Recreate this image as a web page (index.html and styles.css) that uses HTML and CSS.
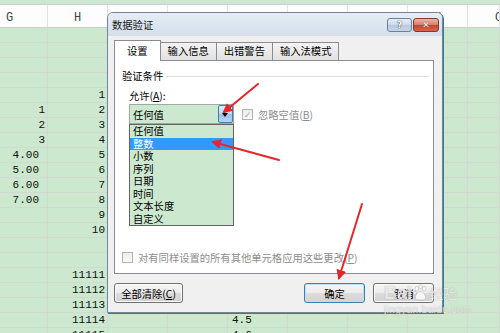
FILE: index.html
```html
<!DOCTYPE html>
<html lang="zh-CN">
<head>
    <meta charset="UTF-8">
    <title>数据验证</title>
    <link rel="stylesheet" href="styles.css">
</head>
<body>
    <div class="workbook">
        <table class="sheet">
            <colgroup>
                <col class="col-g">
                <col class="col-w" span="7">
                <col class="col-o">
            </colgroup>
            <tr class="strip"><td></td><td></td><td></td><td></td><td></td><td></td><td></td><td></td><td></td></tr>
            <tr class="head"><td class="h-first">G</td><td>H</td><td>I</td><td>J</td><td>K</td><td>L</td><td>M</td><td>N</td><td class="h-last">O</td></tr>
            <tr><td></td><td></td><td></td><td></td><td></td><td></td><td></td><td></td><td></td></tr>
            <tr><td></td><td></td><td></td><td></td><td></td><td></td><td></td><td></td><td></td></tr>
            <tr><td></td><td></td><td></td><td></td><td></td><td></td><td></td><td></td><td></td></tr>
            <tr><td></td><td></td><td></td><td></td><td></td><td></td><td></td><td></td><td></td></tr>
            <tr><td></td><td>1</td><td></td><td></td><td></td><td></td><td></td><td></td><td></td></tr>
            <tr><td>1</td><td>2</td><td></td><td></td><td></td><td></td><td></td><td></td><td></td></tr>
            <tr><td>2</td><td>3</td><td></td><td></td><td></td><td></td><td></td><td></td><td></td></tr>
            <tr><td>3</td><td>4</td><td></td><td></td><td></td><td></td><td></td><td></td><td></td></tr>
            <tr><td class="fx">4.00</td><td>5</td><td></td><td></td><td></td><td></td><td></td><td></td><td></td></tr>
            <tr><td class="fx">5.00</td><td>6</td><td></td><td></td><td></td><td></td><td></td><td></td><td></td></tr>
            <tr><td class="fx">6.00</td><td>7</td><td></td><td></td><td></td><td></td><td></td><td></td><td></td></tr>
            <tr><td class="fx">7.00</td><td>8</td><td></td><td></td><td></td><td></td><td></td><td></td><td></td></tr>
            <tr><td></td><td>9</td><td></td><td></td><td></td><td></td><td></td><td></td><td></td></tr>
            <tr><td></td><td>10</td><td></td><td></td><td></td><td></td><td></td><td></td><td></td></tr>
            <tr><td></td><td></td><td></td><td></td><td></td><td></td><td></td><td></td><td></td></tr>
            <tr><td></td><td></td><td></td><td></td><td></td><td></td><td></td><td></td><td></td></tr>
            <tr><td></td><td>11111</td><td></td><td></td><td></td><td></td><td></td><td></td><td></td></tr>
            <tr><td></td><td>11112</td><td></td><td></td><td></td><td></td><td></td><td></td><td></td></tr>
            <tr><td></td><td>11113</td><td></td><td></td><td></td><td></td><td></td><td></td><td></td></tr>
            <tr><td></td><td>11114</td><td></td><td></td><td class="l">4.5</td><td></td><td></td><td></td><td></td></tr>
            <tr><td></td><td>11115</td><td></td><td></td><td class="l">4.6</td><td></td><td></td><td></td><td></td></tr>
        </table>

        <!-- 数据验证对话框 -->
        <div class="dialog">
            <div class="titlebar">
                <span class="title">数据验证</span>
                <div class="caption-btns">
                    <span class="cap help">?</span>
                    <span class="cap close">✕</span>
                </div>
            </div>
            <div class="client">
                <div class="tabs">
                    <div class="tab active">设置</div>
                    <div class="tab">输入信息</div>
                    <div class="tab">出错警告</div>
                    <div class="tab">输入法模式</div>
                </div>
                <div class="panel">
                    <div class="group">
                        <span>验证条件</span>
                        <i class="rule"></i>
                    </div>
                    <div class="allow-label">允许(<u>A</u>):</div>
                    <div class="allow-row">
                        <div class="combo-wrap">
                            <div class="combo">
                                <span>任何值</span>
                                <span class="drop"></span>
                            </div>
                            <ul class="list">
                                <li>任何值</li>
                                <li class="selected">整数</li>
                                <li>小数</li>
                                <li>序列</li>
                                <li>日期</li>
                                <li>时间</li>
                                <li>文本长度</li>
                                <li>自定义</li>
                            </ul>
                        </div>
                        <div class="check">
                            <span class="box">✓</span>
                            <span>忽略空值(<u>B</u>)</span>
                        </div>
                    </div>
                    <div class="spacer"></div>
                    <div class="check apply">
                        <span class="box"></span>
                        <span>对有同样设置的所有其他单元格应用这些更改(<u>P</u>)</span>
                    </div>
                </div>
                <div class="buttons">
                    <button class="btn btn-clear">全部清除(<u>C</u>)</button>
                    <div class="btn-group">
                        <button class="btn default">确定</button>
                        <button class="btn">取消</button>
                    </div>
                </div>
            </div>
        </div>

        <!-- 标注箭头 -->
        <svg class="arrows" viewBox="0 0 500 333" xmlns="http://www.w3.org/2000/svg">
            <defs>
                <marker id="head" viewBox="0 0 10 10" refX="8" refY="5" markerWidth="5" markerHeight="5" orient="auto">
                    <path d="M0 0L10 5L0 10z" fill="#e8262a"></path>
                </marker>
            </defs>
            <line x1="258" y1="84" x2="224" y2="112" marker-end="url(#head)"></line>
            <line x1="279" y1="160" x2="213" y2="142" marker-end="url(#head)"></line>
            <line x1="362" y1="204" x2="339" y2="278" marker-end="url(#head)"></line>
        </svg>

        <div class="watermark">
            <div class="wm-logo">
                <span class="wm-bai">Bai</span>
                <svg class="wm-paw" viewBox="0 0 16 18" xmlns="http://www.w3.org/2000/svg">
                    <ellipse cx="4" cy="5" rx="1.8" ry="2.4"></ellipse>
                    <ellipse cx="8" cy="2.8" rx="1.8" ry="2.2"></ellipse>
                    <ellipse cx="12" cy="5" rx="1.8" ry="2.4"></ellipse>
                    <ellipse cx="2" cy="9.5" rx="1.5" ry="2"></ellipse>
                    <path d="M8 8c-3 0-5.5 4-5.5 6.5 0 2 2 2.5 3 2.5h5c1 0 3-.5 3-2.5C13.5 12 11 8 8 8z"></path>
                </svg>
                <span class="wm-jy">经验</span>
            </div>
            <div class="wm-url">jingyan.baidu.com</div>
        </div>
    </div>
</body>
</html>
```

FILE: styles.css
```css
:root {
    --sheet-green: #cce8cf;
    --grid: #d3d8d3;
    --tab-border: #898c95;
    --muted: #8d8d8d;
    --select: #3399ff;
}

* {
    margin: 0;
    padding: 0;
    box-sizing: border-box;
}

body {
    width: 500px;
    height: 333px;
    overflow: hidden;
    background: var(--sheet-green);
    font-family: "Noto Sans CJK SC", sans-serif;
}

.workbook {
    position: relative;
    width: 500px;
    height: 333px;
    overflow: hidden;
}

/* 表格区域 */
.sheet {
    border-collapse: separate;
    border-spacing: 0;
    table-layout: fixed;
    width: 500px;
    font-family: "Liberation Mono", monospace;
    font-size: 11px;
    color: #111;
}

.col-g { width: 48px; }
.col-w { width: 60px; }
.col-o { width: 32px; }

.sheet td {
    height: 15px;
    padding: 0 2px 0 0;
    border-right: 1px solid var(--grid);
    border-bottom: 1px solid var(--grid);
    background: var(--sheet-green);
    text-align: right;
    line-height: 14px;
    white-space: nowrap;
    overflow: hidden;
}

.sheet td.fx {
    padding-right: 8px;
}

.sheet td.l {
    text-align: left;
    padding-left: 4px;
}

.sheet .strip td {
    height: 5px;
    border-right: none;
    border-bottom-color: #cfcfcf;
}

.sheet .head td {
    height: 23px;
    background: #fdfdfd;
    border-right-color: #e2e2e2;
    border-bottom-color: #cdcdcd;
    text-align: center;
    vertical-align: bottom;
    font-size: 12px;
    line-height: 14px;
    color: #444;
    padding: 0 0 2px 0;
}

.sheet .head td.h-first {
    text-align: left;
    padding-left: 6px;
}

.sheet .head td.h-last {
    text-align: left;
    padding-left: 27px;
}

/* 对话框 */
.dialog {
    position: absolute;
    left: 107px;
    top: 12px;
    width: 336px;
    height: 301px;
    display: flex;
    flex-direction: column;
    background: #f0f0f0;
    border: 1px solid #71849a;
    border-radius: 6px 6px 0 0;
    box-shadow: 1px 1px 0 #2d7ea6;
    font-size: 10.3px;
    color: #000;
}

.titlebar {
    height: 23px;
    display: flex;
    align-items: center;
    justify-content: space-between;
    padding: 0 3px 0 4px;
    background: linear-gradient(#e5ecf5, #d4dfec);
    border-radius: 5px 5px 0 0;
}

.title {
    color: #1b1b1b;
}

.caption-btns {
    display: flex;
    gap: 1px;
}

.cap {
    width: 25px;
    height: 14px;
    display: flex;
    align-items: center;
    justify-content: center;
    border: 1px solid #6a7f98;
    border-radius: 3px;
    font-family: "DejaVu Sans", sans-serif;
    font-weight: bold;
    font-size: 9px;
    color: #fff;
    text-shadow: 0 0 1px #32465e, 0 0 1px #32465e;
}

.help {
    background: linear-gradient(#e6eef7 0%, #cbd9ea 50%, #b5c8de 51%, #c6d6e9 100%);
}

.close {
    width: 26px;
    background: linear-gradient(#ecb7aa 0%, #d97a63 50%, #c4452d 51%, #d6664b 100%);
    border-color: #7a3a2d;
    text-shadow: 0 0 1px #5a1d12;
}

.client {
    flex: 1;
    display: flex;
    flex-direction: column;
    padding: 4px 8px 9px 6px;
}

.tabs {
    position: relative;
    z-index: 2;
    display: flex;
    align-items: flex-end;
    height: 20px;
}

.tab {
    height: 18px;
    padding: 0 7px;
    margin-left: -1px;
    border: 1px solid var(--tab-border);
    border-bottom: none;
    background: linear-gradient(#f4f4f4, #e1e1e1);
    line-height: 16px;
    white-space: nowrap;
}

.tab.active {
    height: 21px;
    margin-left: 0;
    margin-bottom: -1px;
    padding: 0 12px;
    background: #fff;
    line-height: 20px;
}

.panel {
    height: 214px;
    display: flex;
    flex-direction: column;
    padding: 9px 4px 8px 7px;
    background: #fff;
    border: 1px solid var(--tab-border);
}

.group {
    display: flex;
    align-items: center;
    gap: 3px;
    height: 12px;
    line-height: 12px;
}

.rule {
    flex: 1;
    height: 1px;
    background: #dadde2;
}

.allow-label {
    margin: 8px 0 0 7px;
    line-height: 12px;
}

.allow-row {
    display: flex;
    align-items: flex-start;
    gap: 8px;
    margin: 2px 0 0 7px;
}

.combo-wrap {
    position: relative;
    width: 105px;
}

.combo {
    height: 20px;
    display: flex;
    align-items: center;
    padding-left: 3px;
    background: var(--sheet-green);
    border: 1px solid #9fa9a0;
}

.drop {
    position: relative;
    width: 15px;
    height: 18px;
    margin-left: auto;
    border: 1px solid #3c7fb1;
    border-radius: 2px;
    background: linear-gradient(#dcecfb 0%, #bcd8f4 50%, #9cc3ea 51%, #b3d3f2 100%);
}

.drop::after {
    content: "";
    position: absolute;
    left: 3px;
    top: 7px;
    border-top: 4px solid #000;
    border-left: 3.5px solid transparent;
    border-right: 3.5px solid transparent;
}

/* 下拉列表 */
.list {
    position: absolute;
    top: 100%;
    left: 0;
    width: 105px;
    height: 102px;
    list-style: none;
    background: var(--sheet-green);
    border: 1px solid #646464;
    z-index: 3;
}

.list li {
    height: 12.5px;
    line-height: 12.5px;
    padding-left: 3px;
}

.list li.selected {
    background: var(--select);
    color: #fff;
}

.check {
    display: flex;
    align-items: center;
    gap: 5px;
    color: var(--muted);
    white-space: nowrap;
}

.allow-row .check {
    margin-top: 3px;
}

.box {
    width: 11px;
    height: 11px;
    display: flex;
    align-items: center;
    justify-content: center;
    border: 1px solid #b3b3b3;
    background: linear-gradient(#ececec, #fbfbfb);
    font-family: "DejaVu Sans", sans-serif;
    font-size: 9px;
    color: #a3a3a3;
}

.spacer {
    flex: 1;
}

/* 按钮 */
.buttons {
    display: flex;
    justify-content: space-between;
    margin-top: 9px;
}

.btn-group {
    display: flex;
    gap: 8px;
}

.btn {
    width: 61px;
    height: 20px;
    font: inherit;
    color: #000;
    border: 1px solid #707070;
    border-radius: 3px;
    background: linear-gradient(#f6f6f6 0%, #ebebeb 50%, #dddddd 51%, #d2d2d2 100%);
    box-shadow: inset 0 0 0 1px #fbfbfb;
}

.btn-clear {
    width: 69px;
}

.btn.default {
    border-color: #3c7fb1;
    box-shadow: inset 0 0 0 1px #b9e0f8;
}

/* 箭头 */
.arrows {
    position: absolute;
    left: 0;
    top: 0;
    width: 500px;
    height: 333px;
    pointer-events: none;
    z-index: 5;
}

.arrows line {
    stroke: #e8262a;
    stroke-width: 2;
    stroke-linecap: round;
}

/* 水印 */
.watermark {
    position: absolute;
    left: 384px;
    top: 282px;
    z-index: 6;
    color: rgba(255, 255, 255, 0.75);
    text-shadow: 0 0 1px rgba(110, 110, 110, 0.6);
    pointer-events: none;
}

.wm-logo {
    display: flex;
    align-items: flex-end;
    height: 20px;
}

.wm-bai {
    font-family: "Liberation Sans", sans-serif;
    font-weight: bold;
    font-size: 18px;
    line-height: 18px;
}

.wm-paw {
    width: 15px;
    height: 17px;
    margin: 0 1px 1px 1px;
    fill: rgba(255, 255, 255, 0.75);
    stroke: rgba(110, 110, 110, 0.5);
    stroke-width: 0.6;
}

.wm-jy {
    font-size: 14px;
    line-height: 17px;
}

.wm-url {
    margin-top: 2px;
    font-family: "Liberation Sans", sans-serif;
    font-size: 10px;
    letter-spacing: 0.4px;
}
```
